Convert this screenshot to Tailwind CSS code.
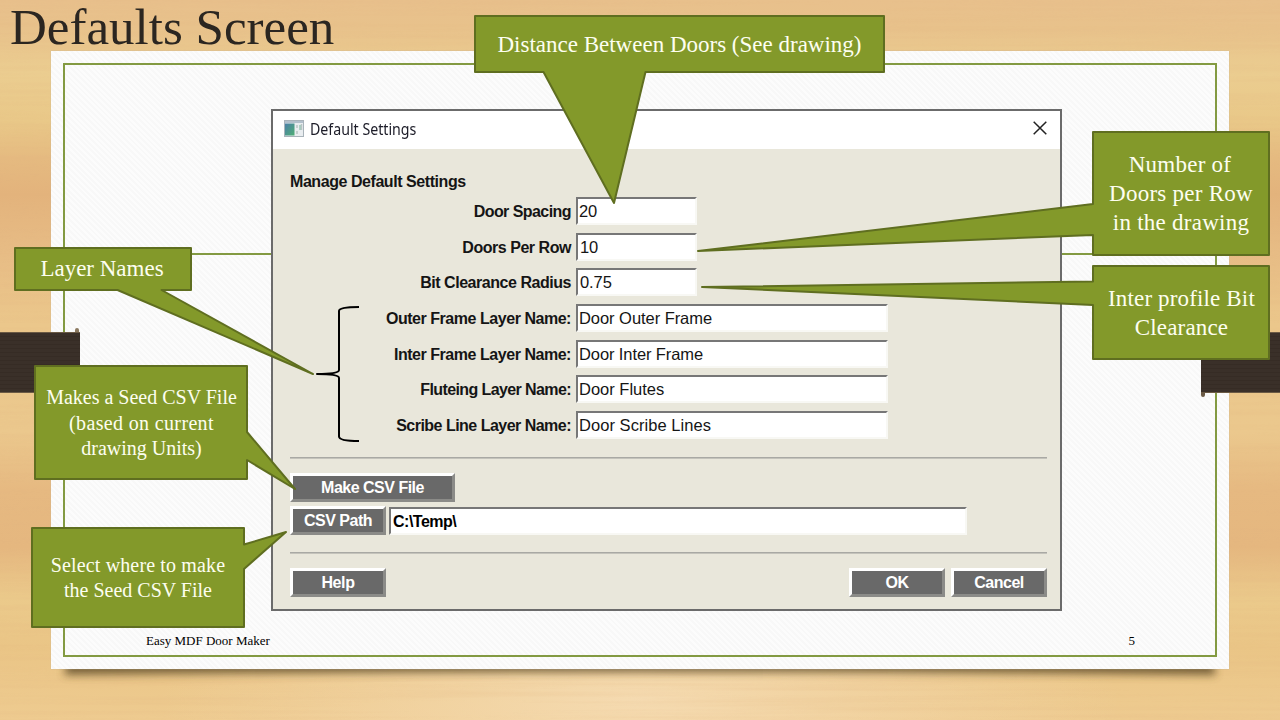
<!DOCTYPE html>
<html lang="en">
<head>
<meta charset="utf-8">
<title>Defaults Screen</title>
<script src="https://cdn.jsdelivr.net/npm/@tailwindcss/browser@4"></script>
</head>
<body class="overflow-hidden">
<main class="relative h-[720px] w-[1280px] overflow-hidden bg-[#e8c388] font-['Liberation_Serif',serif]">

  <!-- wood background -->
  <svg class="absolute inset-0" width="1280" height="720" aria-hidden="true">
    <defs>
      <linearGradient id="wood" x1="0" y1="0" x2="0" y2="1">
        <stop offset="0" stop-color="#e8c08c"/><stop offset=".04" stop-color="#e8c28b"/>
        <stop offset=".1" stop-color="#ebcd90"/><stop offset=".17" stop-color="#e9c888"/>
        <stop offset=".22" stop-color="#e5ba80"/><stop offset=".27" stop-color="#e3b37c"/>
        <stop offset=".35" stop-color="#e7bc85"/><stop offset=".45" stop-color="#ebc78b"/>
        <stop offset=".6" stop-color="#ebc88d"/><stop offset=".68" stop-color="#e6b981"/>
        <stop offset=".76" stop-color="#e5b77f"/><stop offset=".83" stop-color="#ebca8b"/>
        <stop offset=".9" stop-color="#eac586"/><stop offset="1" stop-color="#eecb90"/>
      </linearGradient>
      <radialGradient id="glow"><stop offset="0" stop-color="#f7dfba" stop-opacity=".8"/><stop offset="1" stop-color="#f5dcb4" stop-opacity="0"/></radialGradient>
      <filter id="grain" x="0" y="0" width="100%" height="100%">
        <feTurbulence type="fractalNoise" baseFrequency="0.003 0.18" numOctaves="5" seed="8"/>
        <feColorMatrix values="0 0 0 0 .76  0 0 0 0 .46  0 0 0 0 .22  1.4 0 0 0 -.55"/>
      </filter>
      <filter id="soft" x="-5%" y="-100%" width="110%" height="300%"><feGaussianBlur stdDeviation="4"/></filter>
    </defs>
    <rect width="1280" height="720" fill="url(#wood)"/>
    <ellipse cx="640" cy="700" rx="480" ry="120" fill="url(#glow)"/>
    <rect width="1280" height="720" filter="url(#grain)" opacity=".28"/>
    <path d="M70 650H1210L1216 675Q640 669 64 675Z" fill="#5c4a26" opacity=".8" filter="url(#soft)"/>
  </svg>

  <!-- paper -->
  <div class="absolute left-[51px] top-[51px] h-[618px] w-[1178px] bg-[repeating-linear-gradient(45deg,#fcfcfc_0px,#fcfcfc_2px,#f8f8f8_2px,#f8f8f8_4px)] p-3 shadow-[0_0_1px_#b5ab98]">
    <div class="h-[594px] w-[1154px] border-2 border-[#839a42]">
      <div class="mt-[188px] mr-[120px] ml-[126px] h-0.5 bg-[#839a42]"></div>
    </div>
  </div>
  <div class="absolute left-0 top-[332px] h-[61px] w-20 border-y border-[#6b5a45] bg-[repeating-linear-gradient(#3a3029_0px,#3a3029_3px,#362c25_3px,#362c25_4px)]"></div>
  <div class="absolute left-[1201px] top-[332px] h-[61px] w-[79px] border-y border-[#6b5a45] bg-[repeating-linear-gradient(#3a3029_0px,#3a3029_3px,#362c25_3px,#362c25_4px)]"></div>
  <div class="absolute left-[75px] top-[328px] h-1 w-1 rounded-t-full bg-[#8b7960]"></div>
  <div class="absolute left-[1201px] top-[393px] h-1 w-1 rounded-b-full bg-[#6b5a45]"></div>

  <h1 class="absolute left-[10px] top-0 whitespace-nowrap text-[51px] leading-[55px] text-[#2b2621]">Defaults Screen</h1>
  <footer class="absolute left-[146px] top-[633px] flex w-[989px] justify-between text-[13px] leading-4 text-black">
    <span>Easy MDF Door Maker</span><span>5</span>
  </footer>

  <!-- settings dialog -->
  <section class="absolute left-[271px] top-[109px] flex h-[502px] w-[791px] flex-col border-2 border-[#6b6b6b] bg-[#e9e7db] font-['Liberation_Sans',sans-serif] text-[16px] text-[#151515]">
    <header class="flex h-[38px] shrink-0 items-center bg-white pl-[11px] pr-[13px]">
      <svg width="20" height="17" viewBox="0 0 20 17" class="-mt-[3px] mr-[6px]">
        <defs><linearGradient id="ic" x1="0" y1="0" x2="1" y2="1"><stop stop-color="#4b7fa8"/><stop offset="1" stop-color="#4fae74"/></linearGradient></defs>
        <rect x=".5" y=".5" width="19" height="16" fill="#e9edf0" stroke="#a9b3ba"/>
        <rect x="1" y="1" width="18" height="2" fill="#b3c0cc"/>
        <rect x="1" y="3.5" width="9.500" height="12" fill="url(#ic)"/>
        <path d="M13 5v3M13 11v3M17.500 4v6" stroke="#b9c5c4" stroke-width="1.500"/><path d="M16 5v5" stroke="#77b49a"/>
      </svg>
      <span class="origin-left scale-x-[.915] whitespace-nowrap font-['Noto_Sans',sans-serif] text-[15.5px] text-[#1c1c28]">Default Settings</span>
      <svg class="-mt-1 ml-auto" width="14" height="14" viewBox="0 0 14 14" stroke="#222" stroke-width="1.500"><path d="M.7.7l12.600 12.600M13.300.7L.7 13.300"/></svg>
    </header>
    <div class="flex flex-1 flex-col pl-[17px] pr-[13px]">
      <h2 class="mt-[22px] h-[22px] text-[16px] leading-[21px] font-bold tracking-[-.44px]">Manage Default Settings</h2>
      <div class="grid grid-cols-[281px_312px] auto-rows-[35.7px] items-center gap-x-[5px] font-bold tracking-[-.46px] [&>label]:text-right [&>label]:pt-0.5">
        <label class="tracking-[-.56px]">Door Spacing</label>
        <div class="h-[28px] w-[121px] border-2 border-t-[#777] border-l-[#777] border-r-[#f8f8f4] border-b-[#f8f8f4] bg-white pl-px text-[16.5px] leading-[25px] font-normal tracking-[-.1px]">20</div>
        <label>Doors Per Row</label>
        <div class="h-[28px] w-[121px] border-2 border-t-[#777] border-l-[#777] border-r-[#f8f8f4] border-b-[#f8f8f4] bg-white pl-0.5 text-[16.5px] leading-[25px] font-normal tracking-[-.1px]">10</div>
        <label>Bit Clearance Radius</label>
        <div class="h-[28px] w-[121px] border-2 border-t-[#777] border-l-[#777] border-r-[#f8f8f4] border-b-[#f8f8f4] bg-white pl-0.5 text-[16.5px] leading-[25px] font-normal tracking-[-.1px]">0.75</div>
        <label>Outer Frame Layer Name:</label>
        <div class="h-[28px] border-2 border-t-[#777] border-l-[#777] border-r-[#f8f8f4] border-b-[#f8f8f4] bg-white pl-px text-[16.5px] leading-[25px] font-normal tracking-[-.05px]">Door Outer Frame</div>
        <label>Inter Frame Layer Name:</label>
        <div class="h-[28px] border-2 border-t-[#777] border-l-[#777] border-r-[#f8f8f4] border-b-[#f8f8f4] bg-white pl-px text-[16.5px] leading-[25px] font-normal tracking-[-.1px]">Door Inter Frame</div>
        <label class="tracking-[-.6px]">Fluteing Layer Name:</label>
        <div class="h-[28px] border-2 border-t-[#777] border-l-[#777] border-r-[#f8f8f4] border-b-[#f8f8f4] bg-white pl-px text-[16.5px] leading-[25px] font-normal tracking-[0px]">Door Flutes</div>
        <label class="tracking-[-.52px]">Scribe Line Layer Name:</label>
        <div class="h-[28px] border-2 border-t-[#777] border-l-[#777] border-r-[#f8f8f4] border-b-[#f8f8f4] bg-white pl-px text-[16.5px] leading-[25px] font-normal tracking-[.05px]">Door Scribe Lines</div>
      </div>
      <div class="mt-[14px] h-0.5 shrink-0 border-t border-[#a9a9a4] bg-[#c4c3bb]"></div>
      <button class="mt-[14px] h-[29px] w-[165px] shrink-0 border-[3px] border-t-white border-l-white border-r-[#8b8b88] border-b-[#8b8b88] bg-[#696969] font-bold leading-[22px] tracking-[-.5px] text-white pt-px">Make CSV File</button>
      <div class="mt-[4px] flex gap-[3px]">
        <button class="h-[29px] w-[96px] border-[3px] border-t-white border-l-white border-r-[#8b8b88] border-b-[#8b8b88] bg-[#696969] font-bold leading-[22px] tracking-[-.5px] text-white pt-px">CSV Path</button>
        <div class="mt-px h-[28px] w-[578px] border-2 border-t-[#777] border-l-[#777] border-r-[#f8f8f4] border-b-[#f8f8f4] bg-white pl-0.5 font-bold leading-[25px] tracking-[-.5px] text-black">C:\Temp\</div>
      </div>
      <div class="mt-[17px] h-0.5 shrink-0 border-t border-[#a9a9a4] bg-[#c4c3bb]"></div>
      <div class="mt-[14px] flex gap-[6px] font-bold leading-[22px] text-white">
        <button class="mr-auto h-[29px] w-[96px] border-[3px] border-t-white border-l-white border-r-[#8b8b88] border-b-[#8b8b88] bg-[#696969] pt-px tracking-[-.4px]">Help</button>
        <button class="h-[29px] w-[96px] border-[3px] border-t-white border-l-white border-r-[#8b8b88] border-b-[#8b8b88] bg-[#696969] pt-px tracking-[-.6px]">OK</button>
        <button class="h-[29px] w-[96px] border-[3px] border-t-white border-l-white border-r-[#8b8b88] border-b-[#8b8b88] bg-[#696969] pt-px tracking-[-.5px]">Cancel</button>
      </div>
    </div>
  </section>

  <!-- callout shapes and brace -->
  <svg class="absolute inset-0" width="1280" height="720" fill="#83992a" stroke="#5f6e20" stroke-width="2" stroke-linejoin="round" aria-hidden="true">
    <path d="M475 16H884V72H645.500L614 203L543.500 72H475Z"/>
    <path d="M1093 132H1269V255H1093V235L698 251L1093 204Z"/>
    <path d="M1093 266H1269V359H1093V305L702 287L1093 281.500Z"/>
    <path d="M15 248H191V290H161.500L313 374L117.500 290H15Z"/>
    <path d="M35 366H247V432L295 489L247 460V479H35Z"/>
    <path d="M32 528H244V544.500L286 532L244 569V627H32Z"/>
    <path d="M359 307Q339 307 339 311V370Q339 374 317 374Q339 374 339 378V436.500Q339 441 359 441" fill="none" stroke="#000"/>
  </svg>
  <div class="absolute left-[475px] top-[17px] flex h-[56px] w-[409px] items-center justify-center whitespace-nowrap text-[23px] text-[#fdfef0]">Distance Between Doors (See drawing)</div>
  <div class="absolute left-[1093px] top-[131px] flex h-[124px] w-[176px] items-center justify-center whitespace-nowrap text-center text-[23px] leading-[29px] tracking-[.25px] text-[#fdfef0]"><p><span class="relative -left-px">Number of</span><br>Doors per Row<br>in the drawing</p></div>
  <div class="absolute left-[1093px] top-[266px] flex h-[94px] w-[177px] items-center justify-center whitespace-nowrap text-center text-[23px] leading-[29px] tracking-[.15px] text-[#fdfef0]"><p>Inter profile Bit<br>Clearance</p></div>
  <div class="absolute left-[14px] top-[248px] flex h-[42px] w-[176px] items-center justify-center text-[23px] text-[#fdfef0]">Layer Names</div>
  <div class="absolute left-[35px] top-[367px] flex h-[113px] w-[213px] items-center justify-center whitespace-nowrap text-center text-[20px] leading-[25.5px] text-[#fdfef0]"><p>Makes a Seed CSV File<br><span class="tracking-[.35px]">(based on current</span><br>drawing Units)</p></div>
  <div class="absolute left-[32px] top-[528px] flex h-[100px] w-[212px] items-center justify-center whitespace-nowrap text-center text-[20px] leading-[25.5px] text-[#fdfef0]"><p><span class="tracking-[.14px]">Select where to make</span><br>the Seed CSV File</p></div>
</main>
</body>
</html>
